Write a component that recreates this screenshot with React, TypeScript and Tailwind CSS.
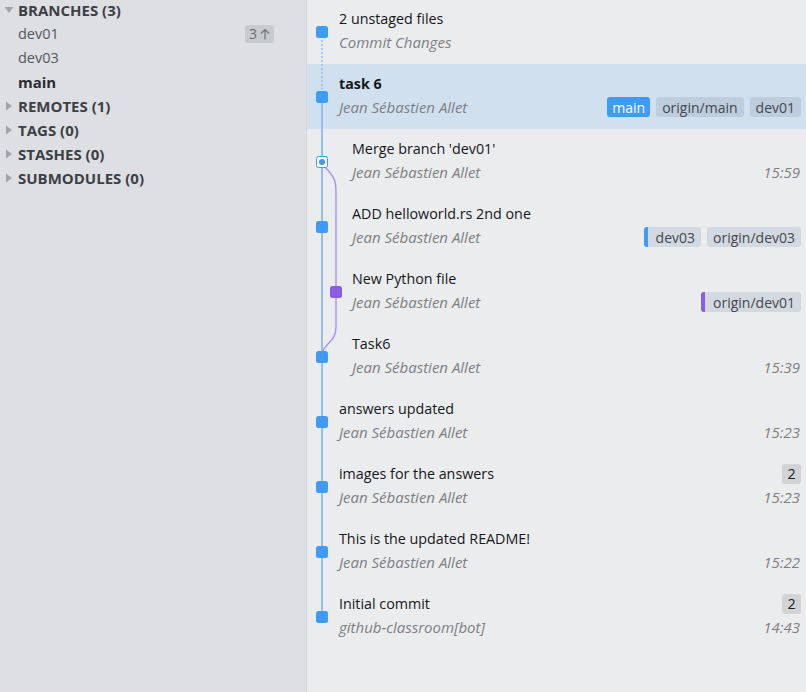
import React from 'react';

type Tag = { label: string; kind: 'head' | 'plain' | 'blue' | 'purple' };

interface Commit {
  title: string;
  author: string;
  time?: string;
  lane: 0 | 1;
  bold?: boolean;
  selected?: boolean;
  pending?: boolean;
  count?: number;
  tags?: Tag[];
}

const commits: Commit[] = [
  { title: '2 unstaged files', author: 'Commit Changes', lane: 0, pending: true },
  {
    title: 'task 6',
    author: 'Jean Sébastien Allet',
    lane: 0,
    bold: true,
    selected: true,
    tags: [
      { label: 'main', kind: 'head' },
      { label: 'origin/main', kind: 'plain' },
      { label: 'dev01', kind: 'plain' },
    ],
  },
  { title: "Merge branch 'dev01'", author: 'Jean Sébastien Allet', time: '15:59', lane: 1 },
  {
    title: 'ADD helloworld.rs 2nd one',
    author: 'Jean Sébastien Allet',
    lane: 1,
    tags: [
      { label: 'dev03', kind: 'blue' },
      { label: 'origin/dev03', kind: 'plain' },
    ],
  },
  {
    title: 'New Python file',
    author: 'Jean Sébastien Allet',
    lane: 1,
    tags: [{ label: 'origin/dev01', kind: 'purple' }],
  },
  { title: 'Task6', author: 'Jean Sébastien Allet', time: '15:39', lane: 1 },
  { title: 'answers updated', author: 'Jean Sébastien Allet', time: '15:23', lane: 0 },
  { title: 'images for the answers', author: 'Jean Sébastien Allet', time: '15:23', lane: 0, count: 2 },
  { title: 'This is the updated README!', author: 'Jean Sébastien Allet', time: '15:22', lane: 0 },
  { title: 'Initial commit', author: 'github-classroom[bot]', time: '14:43', lane: 0, count: 2 },
];

const font = { fontFamily: '"Segoe UI", "Open Sans", "Noto Sans", sans-serif' };

function Caret({ open }: { open?: boolean }) {
  return (
    <svg width="10" height="10" viewBox="0 0 10 10" className="shrink-0">
      {open ? <path d="M0.5 2 L9.5 2 L5 8 Z" fill="#a3a4a7" /> : <path d="M2 0.5 L8 5 L2 9.5 Z" fill="#a3a4a7" />}
    </svg>
  );
}

function Sidebar() {
  const sections = ['REMOTES (1)', 'TAGS (0)', 'STASHES (0)', 'SUBMODULES (0)'];
  return (
    <div className="w-[307px] shrink-0 h-full bg-[#dedfe2] border-r border-[#d3d4d7] text-[14.5px]">
      <div className="flex items-center h-[22px] pb-[2px] pl-[4px] gap-[4px]">
        <Caret open />
        <span className="font-bold text-[15px] text-[#3c3f45]">BRANCHES (3)</span>
      </div>
      <div className="flex items-center justify-between h-[24px] pl-[18px] pr-[32px]">
        <span className="text-[#55585e]">dev01</span>
        <span className="flex items-center gap-[3px] h-[18px] px-[4px] rounded-[3px] bg-[#c9cacd] text-[#6a6c70] text-[14px] leading-none">
          3
          <svg width="10" height="12" viewBox="0 0 10 12">
            <path d="M5 11.5 V1.5 M1 5.5 L5 1.5 L9 5.5" stroke="#707276" strokeWidth="1.2" fill="none" />
          </svg>
        </span>
      </div>
      <div className="flex items-center h-[24px] pl-[18px] text-[#55585e]">dev03</div>
      <div className="flex items-center h-[24px] pl-[18px] font-bold text-[15px] text-[#2b2d31]">main</div>
      {sections.map(s => (
        <div key={s} className="flex items-center h-[24px] pl-[4px] gap-[4px]">
          <Caret />
          <span className="font-bold text-[15px] text-[#3c3f45]">{s}</span>
        </div>
      ))}
    </div>
  );
}

function TagChip({ tag, selected }: { tag: Tag; selected?: boolean }) {
  if (tag.kind === 'head') {
    return <span className="h-[20px] px-[5px] flex items-center rounded-[3px] bg-[#3d9bfb] text-white">{tag.label}</span>;
  }
  const bg = selected ? 'bg-[#bdcddd]' : 'bg-[#d3d9e1]';
  return (
    <span className={`h-[20px] flex items-center rounded-[3px] overflow-hidden text-[#45484d] ${bg}`}>
      {tag.kind === 'blue' && <span className="w-[4px] h-full bg-[#3d9bfb] mr-[2px]" />}
      {tag.kind === 'purple' && <span className="w-[4px] h-full bg-[#8b5ce6] mr-[2px]" />}
      <span className="px-[6px]">{tag.label}</span>
    </span>
  );
}

function Graph() {
  const y = (i: number) => i * 65 + 33;
  const main = 15;
  const side = 29;
  return (
    <svg className="absolute left-0 top-0 pointer-events-none" width="40" height="660">
      <line x1={main} y1={y(0)} x2={main} y2={y(1)} stroke="#9fcaf8" strokeWidth="2" strokeDasharray="2 2" />
      <line x1={main} y1={y(1)} x2={main} y2={y(9)} stroke="#8ec0f6" strokeWidth="2" />
      <path
        d={`M${main + 2} ${y(2) + 4} C ${side} ${y(2) + 16}, ${side} ${y(2) + 20}, ${side} ${y(2) + 32} L ${side} ${y(5) - 30} C ${side} ${y(5) - 14}, ${main + 1} ${y(5) - 14}, ${main} ${y(5) - 2}`}
        stroke="#ae94ec"
        strokeWidth="1.5"
        fill="none"
      />
      {commits.map((c, i) => {
        if (i === 2) {
          return (
            <g key={i}>
              <rect x={main - 5.5} y={y(i) - 5.5} width="11" height="11" rx="2" fill="#ffffff" stroke="#3d9bfb" strokeWidth="1" />
              <circle cx={main} cy={y(i)} r="3" fill="#3d9bfb" />
            </g>
          );
        }
        const x = i === 4 ? side : main;
        const color = i === 4 ? '#8b5ce6' : '#3d9bfb';
        return <rect key={i} x={x - 6} y={y(i) - 6} width="12" height="12" rx="2.5" fill={color} />;
      })}
    </svg>
  );
}

export default function App() {
  return (
    <div className="w-[806px] h-[692px] flex overflow-hidden bg-[#ebecee]" style={font}>
      <Sidebar />
      <div className="flex-1 relative text-[14.3px] -mt-[1px]">
        {commits.map((c, i) => (
          <div
            key={i}
            className={`h-[65px] pt-[10px] pr-[5px] flex flex-col gap-[3px] ${c.selected ? 'bg-[#d1e0ef]' : ''} ${
              c.lane === 1 ? 'pl-[45px]' : 'pl-[32px]'
            }`}
          >
            <div className="h-[20px] flex items-center justify-between">
              <span className={`text-[#16181b] ${c.bold ? 'font-bold' : ''}`}>{c.title}</span>
              {c.count && (
                <span className="h-[20px] w-[19px] flex items-center justify-center rounded-[3px] bg-[#d2d3d5] text-[#1c1d20]">
                  {c.count}
                </span>
              )}
            </div>
            <div className="h-[20px] flex items-center justify-between">
              <span className="italic text-[15px] text-[#7d7f84]">{c.author}</span>
              {c.tags && (
                <span className="flex items-center gap-[6px] text-[14px]">
                  {c.tags.map(t => (
                    <TagChip key={t.label} tag={t} selected={c.selected} />
                  ))}
                </span>
              )}
              {c.time && <span className="italic text-[15px] text-[#7d7f84] pr-[1px]">{c.time}</span>}
            </div>
          </div>
        ))}
        <Graph />
      </div>
    </div>
  );
}
